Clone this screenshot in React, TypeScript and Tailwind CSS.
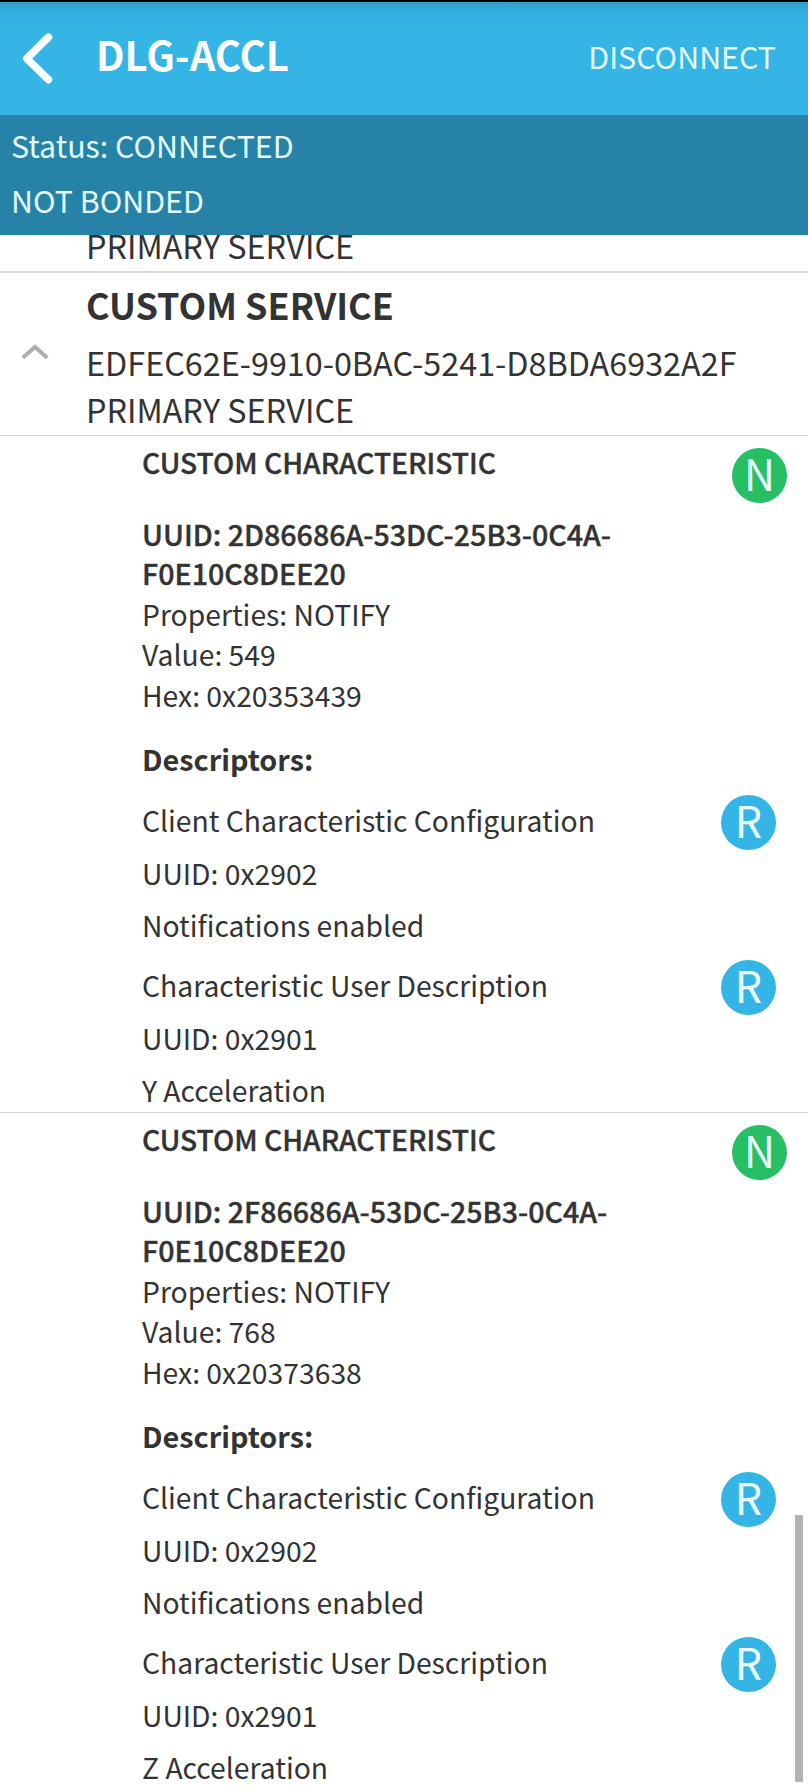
import type { ReactNode } from "react";

type Characteristic = {
  uuid: string;
  value: string;
  hex: string;
  description: string;
};

const characteristics: Characteristic[] = [
  {
    uuid: "2D86686A-53DC-25B3-0C4A-F0E10C8DEE20",
    value: "549",
    hex: "0x20353439",
    description: "Y Acceleration",
  },
  {
    uuid: "2F86686A-53DC-25B3-0C4A-F0E10C8DEE20",
    value: "768",
    hex: "0x20373638",
    description: "Z Acceleration",
  },
];

function Badge({ letter, className }: { letter: string; className: string }) {
  return (
    <span
      className={`flex size-[55px] shrink-0 items-start justify-center rounded-full text-[43px] leading-[49px] text-[#e9fdff] ${className}`}
    >
      {letter}
    </span>
  );
}

function Descriptor({
  name,
  uuid,
  children,
  className = "",
}: {
  name: string;
  uuid: string;
  children: ReactNode;
  className?: string;
}) {
  return (
    <div className={`flex items-start justify-between pr-8 ${className}`}>
      <div className="pt-[2.5px] leading-[44px]">
        <p>{name}</p>
        <p className="mt-[9.5px]">UUID: {uuid}</p>
        <p className="mt-[7.5px]">{children}</p>
      </div>
      <Badge letter="R" className="bg-[#34b5e5]" />
    </div>
  );
}

function CharacteristicItem({ item }: { item: Characteristic }) {
  return (
    <section className="h-[677px] shrink-0 border-t border-[#d4d4d4] pl-[142px] text-[28.3px]">
      <div className="flex items-start justify-between pr-[21px] pt-[5px]">
        <h3 className="pt-px text-[28.2px] font-medium leading-[39px] [-webkit-text-stroke:0.4px]">
          CUSTOM CHARACTERISTIC
        </h3>
        <Badge letter="N" className="mt-[7px] bg-[#27bf63]" />
      </div>
      <p className="mt-[11px] w-[500px] text-[28.6px] font-medium leading-[39px] [-webkit-text-stroke:0.4px]">
        UUID: {item.uuid}
      </p>
      <div className="mt-[1.5px] leading-[40.5px]">
        <p>Properties: NOTIFY</p>
        <p>Value: {item.value}</p>
        <p>Hex: {item.hex}</p>
      </div>
      <h4 className="mt-[23.5px] text-[28.8px] font-bold leading-[40px]">Descriptors:</h4>
      <Descriptor name="Client Characteristic Configuration" uuid="0x2902" className="mt-[16.5px]">
        Notifications enabled
      </Descriptor>
      <Descriptor name="Characteristic User Description" uuid="0x2901" className="mt-[13.5px]">
        {item.description}
      </Descriptor>
    </section>
  );
}

export default function App() {
  return (
    <div className="relative flex h-[1789px] w-[808px] flex-col overflow-hidden bg-white font-['Noto_Sans_CJK_SC','Noto_Sans',sans-serif] text-[#333333]">
      <header className="flex h-[115px] shrink-0 items-center border-t-2 border-black bg-[#34b5e5] bg-linear-to-b from-[#309fca] via-[#33b0df] via-10% to-[#34b5e5] to-30% pb-[10px] pl-[22px] pr-8 text-white">
        <svg width="31" height="51" viewBox="0 0 31 51" fill="none" className="mt-[10px] shrink-0">
          <path
            d="M26.4 4.2 4.8 25.5l21.6 21.1"
            stroke="#fff"
            strokeWidth="7.6"
            strokeLinecap="round"
            strokeLinejoin="round"
          />
        </svg>
        <h1 className="ml-[43px] grow text-[40px] font-bold leading-[56px]">DLG-ACCL</h1>
        <button className="pt-1 text-[30.4px] leading-[44px] text-[#e2fcff]">DISCONNECT</button>
      </header>
      <div className="h-[120px] shrink-0 bg-[#2683a7] pl-[11px] pt-[3px] text-[30.4px] leading-[55px] text-[#e2fcff]">
        <p>Status: CONNECTED</p>
        <p>NOT BONDED</p>
      </div>
      <div className="flex h-[36px] shrink-0 items-end overflow-hidden pb-[6px] pl-[86px] text-[32.35px] leading-[40px]">
        PRIMARY SERVICE
      </div>
      <section className="flex h-[164px] shrink-0 border-t-2 border-[#dadada] text-[32.35px]">
        <div className="w-[86px] shrink-0 pl-[21px] pt-[71px]">
          <svg width="28" height="16" viewBox="0 0 28 16" fill="none">
            <path d="M1.8 13.8 14 3l12.2 10.8" stroke="#aeaeae" strokeWidth="4" />
          </svg>
        </div>
        <div>
          <h2 className="pt-[4px] text-[36px] font-bold leading-[54px]">CUSTOM SERVICE</h2>
          <p className="mt-[7px] leading-[47px]">EDFEC62E-9910-0BAC-5241-D8BDA6932A2F</p>
          <p className="leading-[47px]">PRIMARY SERVICE</p>
        </div>
      </section>
      {characteristics.map((item) => (
        <CharacteristicItem key={item.uuid} item={item} />
      ))}
      <div className="absolute right-[5px] top-[1515px] h-[267px] w-2 bg-[#b2b2b2]" />
    </div>
  );
}
